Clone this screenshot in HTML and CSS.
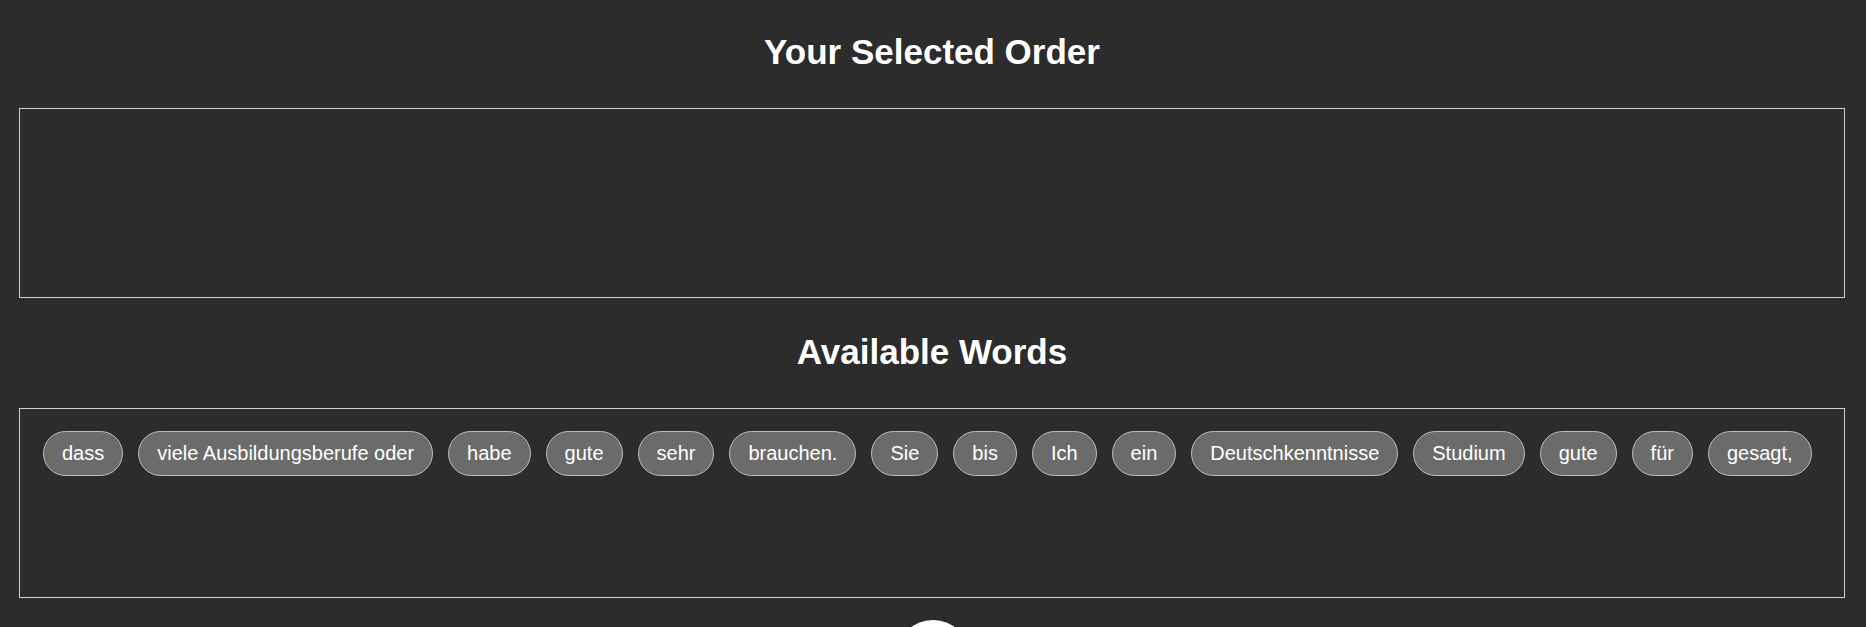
FILE: index.html
```html
<!DOCTYPE html>
<html lang="de">
<head>
<meta charset="utf-8">
<title>Word Order</title>
<link rel="stylesheet" href="styles.css">
</head>
<body>
<main class="page">
  <h2 class="title title-first">Your Selected Order</h2>
  <div class="zone zone-selected"></div>
  <h2 class="title">Available Words</h2>
  <div class="zone zone-words">
    <span class="chip">dass</span>
    <span class="chip">viele Ausbildungsberufe oder</span>
    <span class="chip">habe</span>
    <span class="chip">gute</span>
    <span class="chip">sehr</span>
    <span class="chip">brauchen.</span>
    <span class="chip">Sie</span>
    <span class="chip">bis</span>
    <span class="chip">Ich</span>
    <span class="chip">ein</span>
    <span class="chip">Deutschkenntnisse</span>
    <span class="chip">Studium</span>
    <span class="chip">gute</span>
    <span class="chip">für</span>
    <span class="chip">gesagt,</span>
  </div>
  <div class="actions">
    <button class="round-btn" type="button" aria-label="Check"></button>
  </div>
</main>
</body>
</html>
```
FILE: styles.css
```css
html, body {
  margin: 0;
  padding: 0;
  background: #2c2c2c;
  overflow: hidden;
}
body {
  font-family: "Liberation Sans", Arial, sans-serif;
  color: #ffffff;
}
.page {
  padding: 0 21px 0 19px;
}
.title {
  margin: 34px 0 36px;
  font-size: 35px;
  line-height: 40px;
  font-weight: bold;
  text-align: center;
  color: #ffffff;
}
.title-first {
  margin: 32px 0 36px;
}
.zone {
  box-sizing: border-box;
  height: 190px;
  border: 1px solid #cfcfcf;
  margin-bottom: 1px;
}
.zone-words {
  display: flex;
  flex-wrap: wrap;
  align-content: flex-start;
  gap: 15px;
  padding: 22px 23px;
}
.chip {
  display: inline-block;
  padding: 10px 18px;
  font-size: 20px;
  line-height: 23px;
  color: #ffffff;
  background: #6b6b6b;
  border: 1px solid #bdbdbd;
  border-radius: 23px;
  white-space: nowrap;
}
.actions {
  display: flex;
  justify-content: center;
  padding-top: 21px;
}
.round-btn {
  width: 74px;
  height: 74px;
  border-radius: 50%;
  border: none;
  background: #ffffff;
  padding: 0;
  margin-left: 2px;
}
```
